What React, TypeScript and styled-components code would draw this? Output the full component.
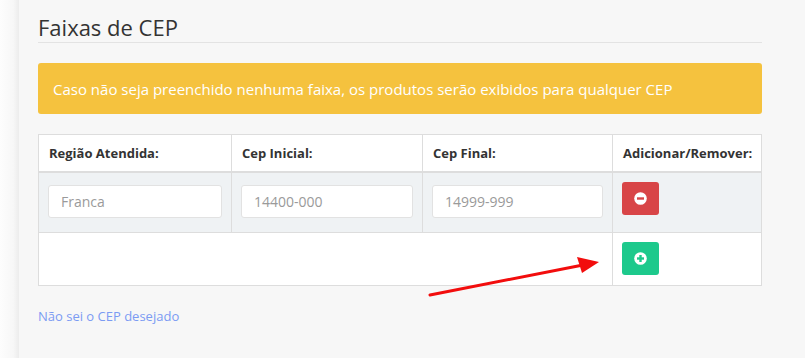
import React from "react";
import styled, { createGlobalStyle } from "styled-components";

const GlobalStyle = createGlobalStyle`
  html, body {
    margin: 0;
    padding: 0;
    background: #fbfbfb;
    font-family: "Open Sans", "Liberation Sans", sans-serif;
  }
`;

interface Faixa {
  regiao: string;
  cepInicial: string;
  cepFinal: string;
}

const faixas: Faixa[] = [
  { regiao: "Franca", cepInicial: "14400-000", cepFinal: "14999-999" },
];

const Page = styled.div`
  display: flex;
  width: 805px;
  height: 358px;
  overflow: hidden;
`;

const Gutter = styled.div`
  width: 19px;
  flex-shrink: 0;
  background: linear-gradient(to right, #fdfdfd 0%, #f7f7f7 70%, #ececec 100%);
`;

const Panel = styled.main`
  flex: 1;
  background: #f7f7f7;
  padding: 12px 44px 0 19px;
  position: relative;
`;

const Title = styled.h2`
  margin: 0;
  font-size: 22px;
  font-weight: 400;
  color: #333;
  line-height: 30px;
  border-bottom: 1px solid #e3e3e3;
`;

const Alert = styled.div`
  margin-top: 20px;
  background: #f5c23e;
  color: #fff;
  border-radius: 3px;
  padding: 0 15px;
  height: 51px;
  display: flex;
  align-items: center;
  font-size: 15px;
`;

const Table = styled.table`
  margin-top: 20px;
  width: 723px;
  border-collapse: collapse;
  background: #fff;
  table-layout: fixed;
`;

const Th = styled.th<{ w: number }>`
  box-sizing: border-box;
  width: ${(p) => p.w}px;
  text-align: left;
  font-size: 13px;
  font-weight: 700;
  color: #333;
  padding: 0 10px;
  height: 37px;
  white-space: nowrap;
  border: 1px solid #dddddd;
  border-bottom: 2px solid #dddddd;
`;

const Row = styled.tr<{ striped?: boolean }>`
  background: ${(p) => (p.striped ? "#eff2f4" : "#fff")};
`;

const Td = styled.td`
  padding: 9px 9px 10px;
  vertical-align: top;
  border: 1px solid #dddddd;
`;

const Input = styled.input`
  box-sizing: border-box;
  display: block;
  width: 100%;
  height: 33px;
  margin: 3px 0 4px;
  padding: 0 12px;
  border: 1px solid #e2e2e2;
  border-radius: 3px;
  background: #fff;
  font-family: "Open Sans", "Liberation Sans", sans-serif;
  font-size: 14px;
  color: #555;
  &::placeholder {
    color: #9a9a9a;
  }
`;

const ActionButton = styled.button<{ tone: "add" | "remove" }>`
  display: flex;
  align-items: center;
  justify-content: center;
  width: 37px;
  height: 33px;
  border: none;
  border-radius: 3px;
  padding: 0;
  cursor: pointer;
  background: ${(p) => (p.tone === "add" ? "#1dc98c" : "#d84547")};
`;

const HelpLink = styled.a`
  display: inline-block;
  margin-top: 21px;
  font-size: 13px;
  color: #7b9bf3;
  text-decoration: none;
`;

const Arrow = styled.svg`
  position: absolute;
  left: 392px;
  top: 250px;
  pointer-events: none;
`;

const CircleIcon: React.FC<{ plus?: boolean; color: string }> = ({ plus, color }) => (
  <svg width="13" height="13" viewBox="0 0 13 13">
    <circle cx="6.5" cy="6.5" r="6.3" fill="#fff" />
    <rect x="3" y="5.3" width="7" height="2.4" fill={color} />
    {plus && <rect x="5.3" y="3" width="2.4" height="7" fill={color} />}
  </svg>
);

export default function App() {
  return (
    <>
      <GlobalStyle />
      <Page>
        <Gutter />
        <Panel>
          <Title>Faixas de CEP</Title>
          <Alert>
            Caso não seja preenchido nenhuma faixa, os produtos serão exibidos para qualquer CEP
          </Alert>
          <Table>
            <thead>
              <tr>
                <Th w={193}>Região Atendida:</Th>
                <Th w={191}>Cep Inicial:</Th>
                <Th w={190}>Cep Final:</Th>
                <Th w={149}>Adicionar/Remover:</Th>
              </tr>
            </thead>
            <tbody>
              {faixas.map((f, i) => (
                <Row striped key={i}>
                  <Td>
                    <Input placeholder={f.regiao} />
                  </Td>
                  <Td>
                    <Input placeholder={f.cepInicial} />
                  </Td>
                  <Td>
                    <Input placeholder={f.cepFinal} />
                  </Td>
                  <Td>
                    <ActionButton tone="remove">
                      <CircleIcon color="#d84547" />
                    </ActionButton>
                  </Td>
                </Row>
              ))}
              <Row>
                <Td colSpan={3} />
                <Td>
                  <ActionButton tone="add">
                    <CircleIcon plus color="#1dc98c" />
                  </ActionButton>
                </Td>
              </Row>
            </tbody>
          </Table>
          <HelpLink href="#">Não sei o CEP desejado</HelpLink>
          <Arrow width="200" height="50" viewBox="0 0 200 50">
            <line x1="19" y1="45" x2="172" y2="15" stroke="#f20d0d" strokeWidth="3" strokeLinecap="round" />
            <polygon points="188,12 166,7 171,23" fill="#f20d0d" />
          </Arrow>
        </Panel>
      </Page>
    </>
  );
}
